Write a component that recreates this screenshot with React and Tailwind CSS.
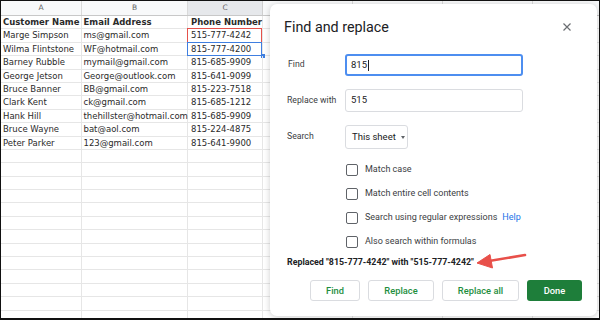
import React from "react";

const rows = [
  ["Customer Name", "Email Address", "Phone Number"],
  ["Marge Simpson", "ms@gmail.com", "515-777-4242"],
  ["Wilma Flintstone", "WF@hotmail.com", "815-777-4200"],
  ["Barney Rubble", "mymail@gmail.com", "815-685-9909"],
  ["George Jetson", "George@outlook.com", "815-641-9099"],
  ["Bruce Banner", "BB@gmail.com", "815-223-7518"],
  ["Clark Kent", "ck@gmail.com", "815-685-1212"],
  ["Hank Hill", "thehillster@hotmail.com", "815-685-9909"],
  ["Bruce Wayne", "bat@aol.com", "815-224-4875"],
  ["Peter Parker", "123@gmail.com", "815-641-9900"],
];

const EMPTY_ROWS = 13;
const extraCols = ["D", "E", "F", "G"];

const Sheet = () => {
  const allRows = [...rows, ...Array.from({ length: EMPTY_ROWS }, () => ["", "", ""])];

  return (
    <div className="flex flex-col font-['DejaVu_Sans',sans-serif] text-[8.5px] text-[#2a2a2a]">
      <div className="flex h-[15px] border-b border-[#c8c8c8] bg-[#f8f9fa] text-[7.5px] text-[#666]">
        <div className="flex w-[81px] shrink-0 items-center justify-center border-r border-[#dadada]">A</div>
        <div className="flex w-[106px] shrink-0 items-center justify-center border-r border-[#dadada]">B</div>
        <div className="flex w-[75px] shrink-0 items-center justify-center border-r border-[#cfcfcf] bg-[#e6e8eb]">C</div>
        {extraCols.map((col) => (
          <div key={col} className="flex w-[90px] shrink-0 items-center justify-center border-r border-[#dadada]">
            {col}
          </div>
        ))}
      </div>

      {allRows.map((row, index) => (
        <div key={index} className="flex h-[13.4px] border-b border-[#e6e6e6] leading-[12.4px]">
          <div className={`w-[81px] shrink-0 whitespace-nowrap border-r border-[#e6e6e6] pl-[2px] ${index === 0 ? "font-bold" : ""}`}>
            {row[0]}
          </div>
          <div className={`w-[106px] shrink-0 whitespace-nowrap border-r border-[#e6e6e6] pl-[1.5px] ${index === 0 ? "font-bold" : ""}`}>
            {row[1]}
          </div>
          <div className={`relative w-[75px] shrink-0 whitespace-nowrap border-r border-[#e6e6e6] pl-[3px] ${index === 0 ? "font-bold" : ""}`}>
            {row[2]}
            {index === 1 && (
              <div className="absolute -left-px -top-px h-[15px] w-[75px] border-[1.5px] border-[#e5514b]" />
            )}
            {index === 2 && (
              <>
                <div className="absolute -left-px -top-px h-[14.5px] w-[75px] border-[1.5px] border-[#3f7fe0]" />
                <div className="absolute -right-[3px] -bottom-[3px] h-[4px] w-[4px] bg-[#3f7fe0]" />
              </>
            )}
          </div>
          {extraCols.map((col) => (
            <div key={col} className="w-[90px] shrink-0 border-r border-[#e6e6e6]" />
          ))}
        </div>
      ))}
    </div>
  );
};

const Checkbox = ({ label, help }) => (
  <div className="flex h-[24px] items-center">
    <div className="ml-[59px] h-[12px] w-[12px] rounded-[2px] border-[1.5px] border-[#5f6368]" />
    <span className="ml-[7px] text-[9px] text-[#3c4043]">{label}</span>
    {help && <span className="ml-[5px] text-[9px] text-[#1a73e8]">Help</span>}
  </div>
);

const Button = ({ children, width, primary }) => (
  <button
    type="button"
    className={`flex h-[21px] items-center justify-center rounded-[3px] text-[9.3px] font-medium ${width} ${
      primary
        ? "bg-[#1e7e3a] text-white"
        : "border border-[#dadce0] bg-white text-[#1e8e3e]"
    }`}
  >
    {children}
  </button>
);

const FindReplaceDialog = () => (
  <div className="absolute left-[269px] top-[3px] flex h-[312px] w-[327px] flex-col rounded-[7px] bg-white pl-[17px] pr-[15px] pt-[14px] font-['Roboto',sans-serif] shadow-[0_1px_6px_rgba(0,0,0,0.2)]">
    <div className="flex h-[18px] items-center justify-between">
      <h2 className="-ml-[3px] text-[14.3px] leading-[18px] text-[#202124]">Find and replace</h2>
      <svg width="8" height="8" viewBox="0 0 8 8" className="mr-[11px]">
        <path d="M0.5 0.5 L7.5 7.5 M7.5 0.5 L0.5 7.5" stroke="#6b6e72" strokeWidth="1.2" />
      </svg>
    </div>

    <div className="mt-[18px] flex items-center">
      <span className="w-[58px] pl-[1px] text-[8.7px] text-[#3c4043]">Find</span>
      <div className="flex h-[22px] w-[178px] items-center rounded-[3px] border-2 border-[#4d8ef0] pl-[4px] text-[9.5px] text-[#202124]">
        815<span className="ml-px inline-block h-[11px] w-px bg-[#202124]" />
      </div>
    </div>

    <div className="mt-[13px] flex items-center">
      <span className="w-[58px] whitespace-nowrap text-[8.7px] text-[#3c4043]">Replace with</span>
      <div className="flex h-[23px] w-[178px] items-center rounded-[3px] border border-[#dadce0] pl-[5px] text-[9.5px] text-[#202124]">
        515
      </div>
    </div>

    <div className="mt-[13px] flex items-center">
      <span className="w-[58px] text-[8.7px] text-[#3c4043]">Search</span>
      <div className="flex h-[24px] w-[63px] items-center whitespace-nowrap rounded-[3px] border border-[#dadce0] pl-[6px] text-[9.5px] text-[#202124]">
        This sheet
        <span className="ml-[5px] border-x-[2.5px] border-t-[3px] border-x-transparent border-t-[#5f6368]" />
      </div>
    </div>

    <div className="mt-[9px] flex flex-col">
      <Checkbox label="Match case" />
      <Checkbox label="Match entire cell contents" />
      <Checkbox label="Search using regular expressions" help />
      <Checkbox label="Also search within formulas" />
    </div>

    <div className="mt-[2px] flex h-[14px] items-center whitespace-nowrap text-[8.85px] font-bold text-[#202124]">
      Replaced "815-777-4242" with "515-777-4242"
    </div>

    <div className="mt-[10px] flex justify-end gap-[8px]">
      <Button width="w-[50px]">Find</Button>
      <Button width="w-[66px]">Replace</Button>
      <Button width="w-[77px]">Replace all</Button>
      <Button width="w-[55px]" primary>Done</Button>
    </div>

    <svg width="52" height="20" viewBox="0 0 52 20" className="absolute left-[205px] top-[246px]">
      <path d="M50 5 L8 12" stroke="#e8504a" strokeWidth="2.6" strokeLinecap="round" />
      <path d="M2 13 L15 4.5 L17.5 18 Z" fill="#e8504a" strokeLinejoin="round" stroke="#e8504a" strokeWidth="1" />
    </svg>
  </div>
);

const App = () => (
  <div className="relative h-[320px] w-[600px] overflow-hidden border border-b-2 border-[#111] bg-white">
    <Sheet />
    <FindReplaceDialog />
  </div>
);

export default App;
